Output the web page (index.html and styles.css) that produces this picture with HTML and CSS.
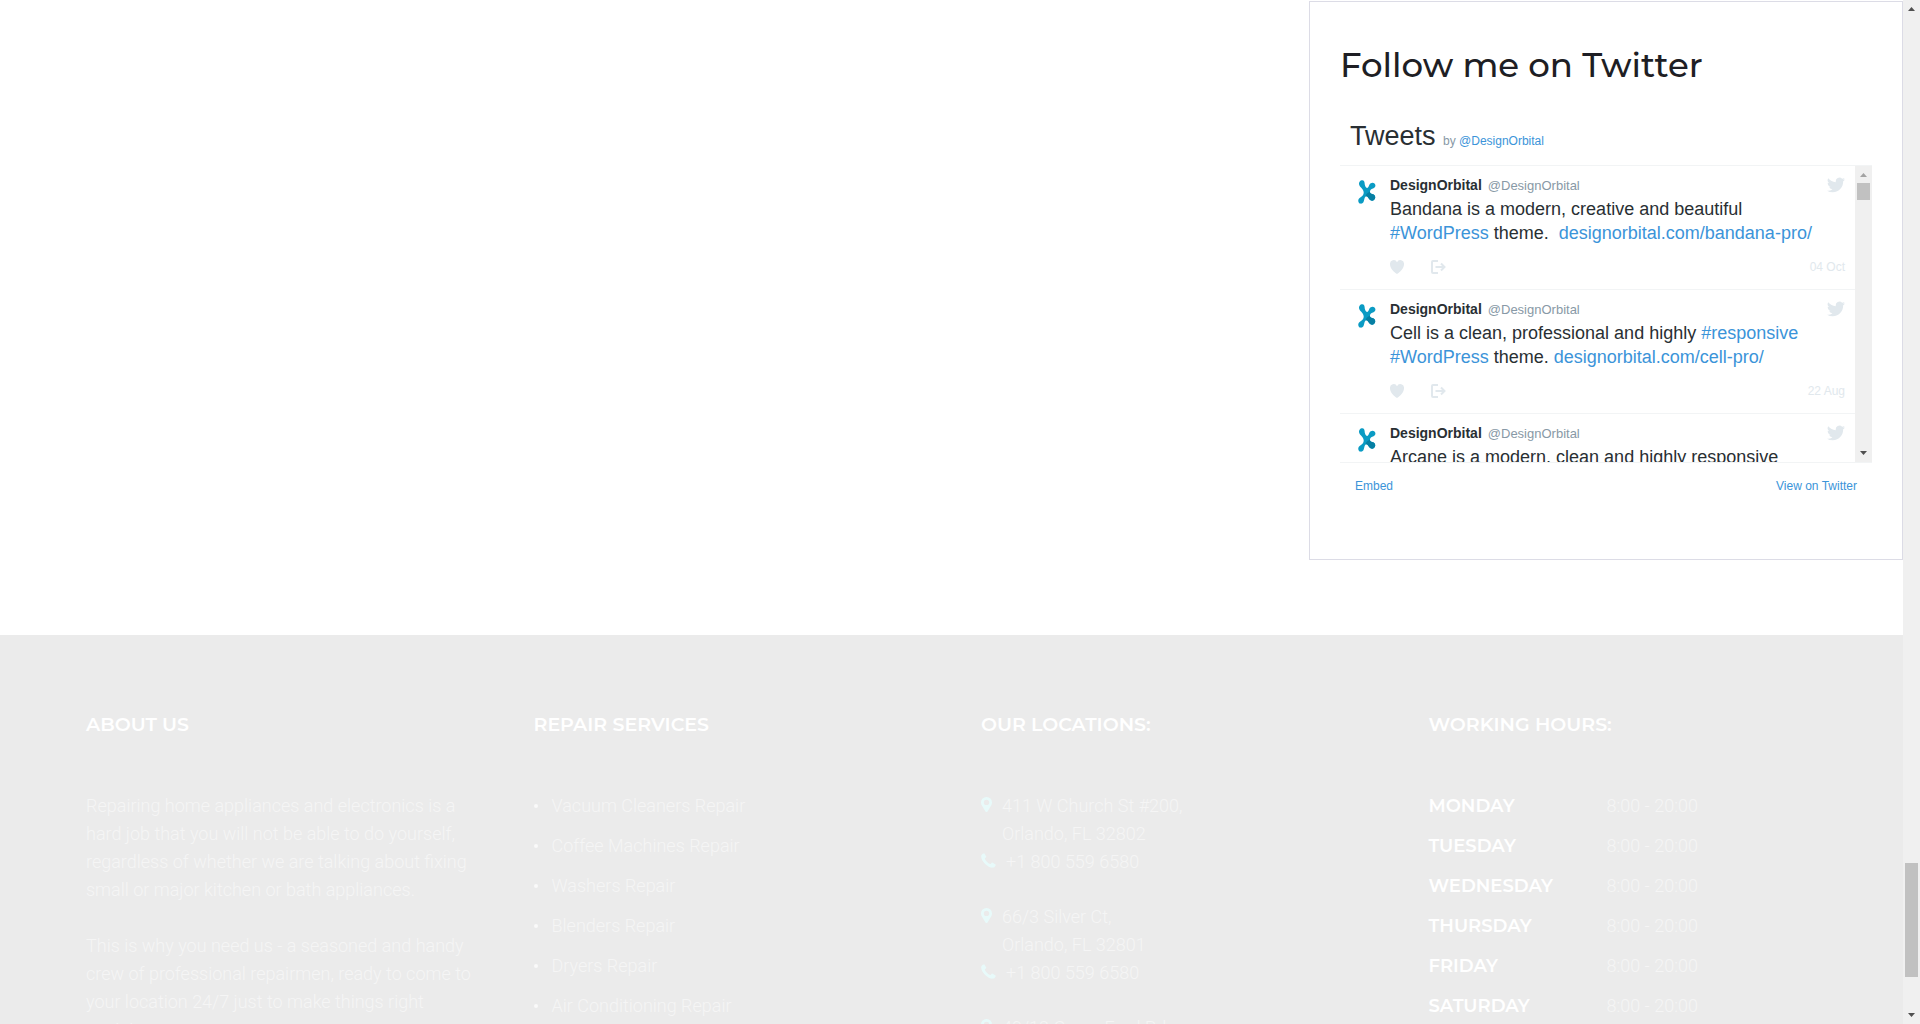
FILE: index.html
```html
<!DOCTYPE html>
<html lang="en">
<head>
<meta charset="utf-8">
<title>Appliance Repair</title>
<link rel="stylesheet" href="styles.css">
</head>
<body>
<svg class="sprite" aria-hidden="true">
  <symbol id="avatar" viewBox="0 0 18 24">
    <path d="M3.500.3C5.500-.2 6.500 1 6.600 3 6.700 5.500 7.500 7.800 9.200 8 10.500 8 10.600 6.200 11.500 4.600 12.500 2.700 15 2 16.500 3.500 18.300 5.300 17.300 7.800 15 8.600 12.700 9.400 11.800 10.500 12 12.200 12.200 14 14 13.700 15.700 14.600 17.700 15.800 17.700 18.600 16 20 14 21.400 11.800 20.300 10.600 18.300 9.600 16.700 8.600 15.700 7.400 16.800 6.200 18 6.400 20.300 5.400 22.300 4.400 24.100 1.700 24.100.7 22.500-.4 20.500.6 18.300 2.600 17.200 5 15.800 6 14 5.600 11.800 5.200 9.400 3.800 8 2 6.400.2 4.500.8 1.200 3.500.3z" fill="#0a9bc4"/>
    <path d="M11.900 11.800C12.100 14 14 13.700 15.700 14.600 17.700 15.800 17.700 18.600 16 20 14 21.400 11.800 20.300 10.600 18.300 9.600 16.700 8.800 15.900 7.600 16.500 8 14 9.500 12.500 11.900 11.800z" fill="#067fa3"/>
  </symbol>
  <symbol id="bird" viewBox="0 0 24 24"><path d="M23.95 4.57a10 10 0 0 1-2.82.77 4.96 4.96 0 0 0 2.16-2.72c-.95.55-2 .95-3.13 1.18a4.92 4.92 0 0 0-8.38 4.48C7.69 8.1 4.07 6.13 1.64 3.16a4.92 4.92 0 0 0 1.52 6.57 4.9 4.9 0 0 1-2.23-.61v.06a4.92 4.92 0 0 0 3.95 4.83 5 5 0 0 1-2.21.08 4.94 4.94 0 0 0 4.6 3.42A9.87 9.87 0 0 1 0 19.54a14 14 0 0 0 7.55 2.21c9.05 0 14-7.5 14-13.98 0-.21 0-.42-.02-.63a9.94 9.94 0 0 0 2.46-2.55z"/></symbol>
  <symbol id="heart" viewBox="0 0 14 14"><path d="M7 14C4 12 0 8.500 0 4.200A3.700 3.700 0 0 1 7 2.200 3.700 3.700 0 0 1 14 4.200C14 8.500 10 12 7 14z"/></symbol>
  <symbol id="share" viewBox="0 0 15 14"><path d="M7 1H2Q1 1 1 2V12Q1 13 2 13H7" fill="none" stroke="currentColor" stroke-width="2"/><path d="M4.500 7H13M10 3.500 13.500 7 10 10.500" fill="none" stroke="currentColor" stroke-width="2"/></symbol>
  <symbol id="pin" viewBox="0 0 11 15"><path fill-rule="evenodd" d="M5.500 0A5.400 5.400 0 0 0 0 5.400C0 7 .5 7.700 1 8.700L4.500 14.500Q5.500 15.500 6.500 14.500L10 8.700C10.500 7.700 11 7 11 5.400A5.400 5.400 0 0 0 5.500 0zM5.500 2.700A2.700 2.700 0 1 1 5.500 8.100 2.700 2.700 0 0 1 5.500 2.700z"/></symbol>
  <symbol id="phone" viewBox="0 0 15 15"><path d="M3.200.2Q1 .5.3 2.400C-.3 5 1.700 8.500 4.200 10.900 6.700 13.300 9.800 15 12.300 14.600 14 14 14.700 12.700 14.600 11.400L11.400 9.600Q10.800 9.600 9.700 11 9 11.500 7 9.800 4.500 7.500 3.900 5.900C3.700 5 5.300 4.400 5.200 3.600Z"/></symbol>
</svg>
<div class="window">
  <div class="page">
    <main class="content">
      <section class="card">
        <h2 class="card-title">Follow me on Twitter</h2>
        <div class="timeline">
          <h3 class="timeline-title">Tweets <small>by <a href="#">@DesignOrbital</a></small></h3>
          <div class="viewport">
            <div class="tweets">
              <article class="tweet">
                <svg class="avatar"><use href="#avatar"/></svg>
                <div class="tweet-body">
                  <header class="author"><b>DesignOrbital</b> <span>@DesignOrbital</span><svg class="bird"><use href="#bird"/></svg></header>
                  <p>Bandana is a modern, creative and beautiful <a href="#">#WordPress</a> theme. &nbsp;<a href="#">designorbital.com/bandana-pro/</a></p>
                  <footer class="actions"><button aria-label="Like"><svg class="heart"><use href="#heart"/></svg></button><button aria-label="Share"><svg class="share"><use href="#share"/></svg></button><time>04 Oct</time></footer>
                </div>
              </article>
              <article class="tweet">
                <svg class="avatar"><use href="#avatar"/></svg>
                <div class="tweet-body">
                  <header class="author"><b>DesignOrbital</b> <span>@DesignOrbital</span><svg class="bird"><use href="#bird"/></svg></header>
                  <p>Cell is a clean, professional and highly <a href="#">#responsive</a> <a href="#">#WordPress</a> theme. <a href="#">designorbital.com/cell-pro/</a></p>
                  <footer class="actions"><button aria-label="Like"><svg class="heart"><use href="#heart"/></svg></button><button aria-label="Share"><svg class="share"><use href="#share"/></svg></button><time>22 Aug</time></footer>
                </div>
              </article>
              <article class="tweet">
                <svg class="avatar"><use href="#avatar"/></svg>
                <div class="tweet-body">
                  <header class="author"><b>DesignOrbital</b> <span>@DesignOrbital</span><svg class="bird"><use href="#bird"/></svg></header>
                  <p>Arcane is a modern, clean and highly responsive</p>
                </div>
              </article>
            </div>
            <div class="scrollbar list-bar"><i class="up off"></i><i class="thumb"></i><i class="down"></i></div>
          </div>
          <div class="timeline-foot"><a href="#">Embed</a><a href="#">View on Twitter</a></div>
        </div>
      </section>
    </main>
    <footer class="site-footer">
      <section>
        <h4>ABOUT US</h4>
        <p>Repairing home appliances and electronics is a hard job that you will not be able to do yourself, regardless of whether we are talking about fixing small or major kitchen or bath appliances.</p>
        <p>This is why you need us - a seasoned and handy crew of professional repairmen, ready to come to your location 24/7 just to make things right again!</p>
      </section>
      <section>
        <h4>REPAIR SERVICES</h4>
        <ul class="services">
          <li><a href="#">Vacuum Cleaners Repair</a></li>
          <li><a href="#">Coffee Machines Repair</a></li>
          <li><a href="#">Washers Repair</a></li>
          <li><a href="#">Blenders Repair</a></li>
          <li><a href="#">Dryers Repair</a></li>
          <li><a href="#">Air Conditioning Repair</a></li>
        </ul>
      </section>
      <section>
        <h4>OUR LOCATIONS:</h4>
        <address><svg class="pin"><use href="#pin"/></svg><span>411 W Church St #200,<br>Orlando, FL 32802</span><svg class="phone"><use href="#phone"/></svg><span class="tel">+1 800 559 6580</span></address>
        <address><svg class="pin"><use href="#pin"/></svg><span>66/3 Silver Ct,<br>Orlando, FL 32801</span><svg class="phone"><use href="#phone"/></svg><span class="tel">+1 800 559 6580</span></address>
        <address><svg class="pin"><use href="#pin"/></svg><span>49/12 Green Ford Rd,</span></address>
      </section>
      <section>
        <h4>WORKING HOURS:</h4>
        <table class="hours">
          <tr><th scope="row">MONDAY</th><td>8:00 - 20:00</td></tr>
          <tr><th scope="row">TUESDAY</th><td>8:00 - 20:00</td></tr>
          <tr><th scope="row">WEDNESDAY</th><td>8:00 - 20:00</td></tr>
          <tr><th scope="row">THURSDAY</th><td>8:00 - 20:00</td></tr>
          <tr><th scope="row">FRIDAY</th><td>8:00 - 20:00</td></tr>
          <tr><th scope="row">SATURDAY</th><td>8:00 - 20:00</td></tr>
        </table>
      </section>
    </footer>
  </div>
  <div class="scrollbar page-bar"><i class="up"></i><i class="thumb"></i><i class="down"></i></div>
</div>
</body>
</html>
```
FILE: styles.css
```css
* { box-sizing: border-box; }
body { margin: 0; background: #fff; font-family: Roboto, sans-serif; }
h2, h3, h4, p, ul { margin: 0; padding: 0; }
a { color: inherit; text-decoration: none; }
svg { display: block; flex: none; fill: currentColor; }
.sprite { width: 0; height: 0; position: absolute; }

.window { display: grid; grid-template-columns: minmax(0, 1fr) 17px; height: 100vh; overflow: hidden; }
.page { min-width: 0; overflow: hidden; }

.scrollbar { display: flex; flex-direction: column; align-items: center; background: #f0f0f0; }
.scrollbar .thumb { width: 13px; background: #c1c1c1; }
.up, .down { width: 7px; height: 4px; background: #505050; }
.up { margin: 7px 0 6px; clip-path: polygon(50% 0, 100% 100%, 0 100%); }
.down { margin: auto 0 7px; clip-path: polygon(0 0, 100% 0, 50% 100%); }
.off { background: #a3a3a3; }
.list-bar .thumb { height: 17px; }
.page-bar .thumb { height: 114px; margin-top: 846px; }

.content { display: flex; justify-content: flex-end; padding: 1px 0 75px; }
.card { width: 594px; height: 559px; padding: 39px 30px; border: 1px solid #dcdce6; }
.card-title { font: 500 34px/48px Montserrat, Inter, sans-serif; color: #1e1e24; }

.timeline { margin-top: 24px; font-family: "Liberation Sans", Arial, sans-serif; color: #292f33; }
.timeline a { color: #3b94d9; }
.timeline-title { padding: 7px 10px 0; height: 52px; font-size: 27px; line-height: 32px; font-weight: 400; }
.timeline-title small { font-size: 12px; color: #8899a6; }
.viewport { display: grid; grid-template-columns: minmax(0, 1fr) 17px; height: 298px; overflow: hidden; border: solid #f2f4f5; border-width: 1px 0; }
.tweets { overflow: hidden; }
.tweet { display: flex; gap: 14px; height: 124px; padding: 9px 10px 0 18px; border-bottom: 1px solid #f2f4f5; }
.avatar { width: 18px; height: 24px; margin-top: 5px; }
.tweet-body { flex: 1; min-width: 0; }
.author { display: flex; align-items: center; gap: 6px; height: 20px; font-size: 13px; }
.author b { font-size: 14px; }
.author span { color: #8899a6; }
.bird { width: 18px; height: 18px; margin-left: auto; color: #e1e8ed; }
.tweet p { font-size: 18px; line-height: 24px; margin: 2px 20px 0 0; }
.actions { display: flex; align-items: center; gap: 27px; height: 16px; margin-top: 14px; font-size: 12px; color: #e1e8ed; }
.actions button { padding: 0; border: 0; background: none; color: inherit; }
.heart { width: 14px; height: 14px; }
.share { width: 15px; height: 14px; }
.actions time { margin-left: auto; }
.timeline-foot { display: flex; justify-content: space-between; padding: 15px 15px 0; font-size: 12px; line-height: 16px; }

.site-footer { display: grid; grid-template-columns: repeat(4, minmax(0, 1fr)); column-gap: 60px; padding: 76px 87px 60px 86px; background: #ebebeb; color: #f5f5f5; font-size: 18px; line-height: 28px; font-weight: 300; }
.site-footer h4 { font: 600 19px/28px Montserrat, Inter, sans-serif; color: #fff; margin-bottom: 53px; }
.site-footer p { margin-bottom: 28px; }
.services { list-style: none; }
.services li { display: flex; align-items: center; gap: 14px; margin-bottom: 12px; }
.services li::before { content: ""; width: 4px; height: 4px; border-radius: 50%; background: #fafafa; }
address { display: grid; grid-template-columns: 21px 1fr; font-style: normal; margin-bottom: 27px; }
address svg { color: #e8fafa; }
.pin { width: 11px; height: 15px; margin-top: 5px; }
.phone { width: 15px; height: 15px; margin-top: 5px; }
.tel { padding-left: 4px; }
.hours { border-collapse: collapse; }
.hours th { width: 178px; padding: 0 0 12px; text-align: left; font: 600 18px/28px Montserrat, Inter, sans-serif; color: #fff; }
.hours td { padding: 0 0 12px; }
```
